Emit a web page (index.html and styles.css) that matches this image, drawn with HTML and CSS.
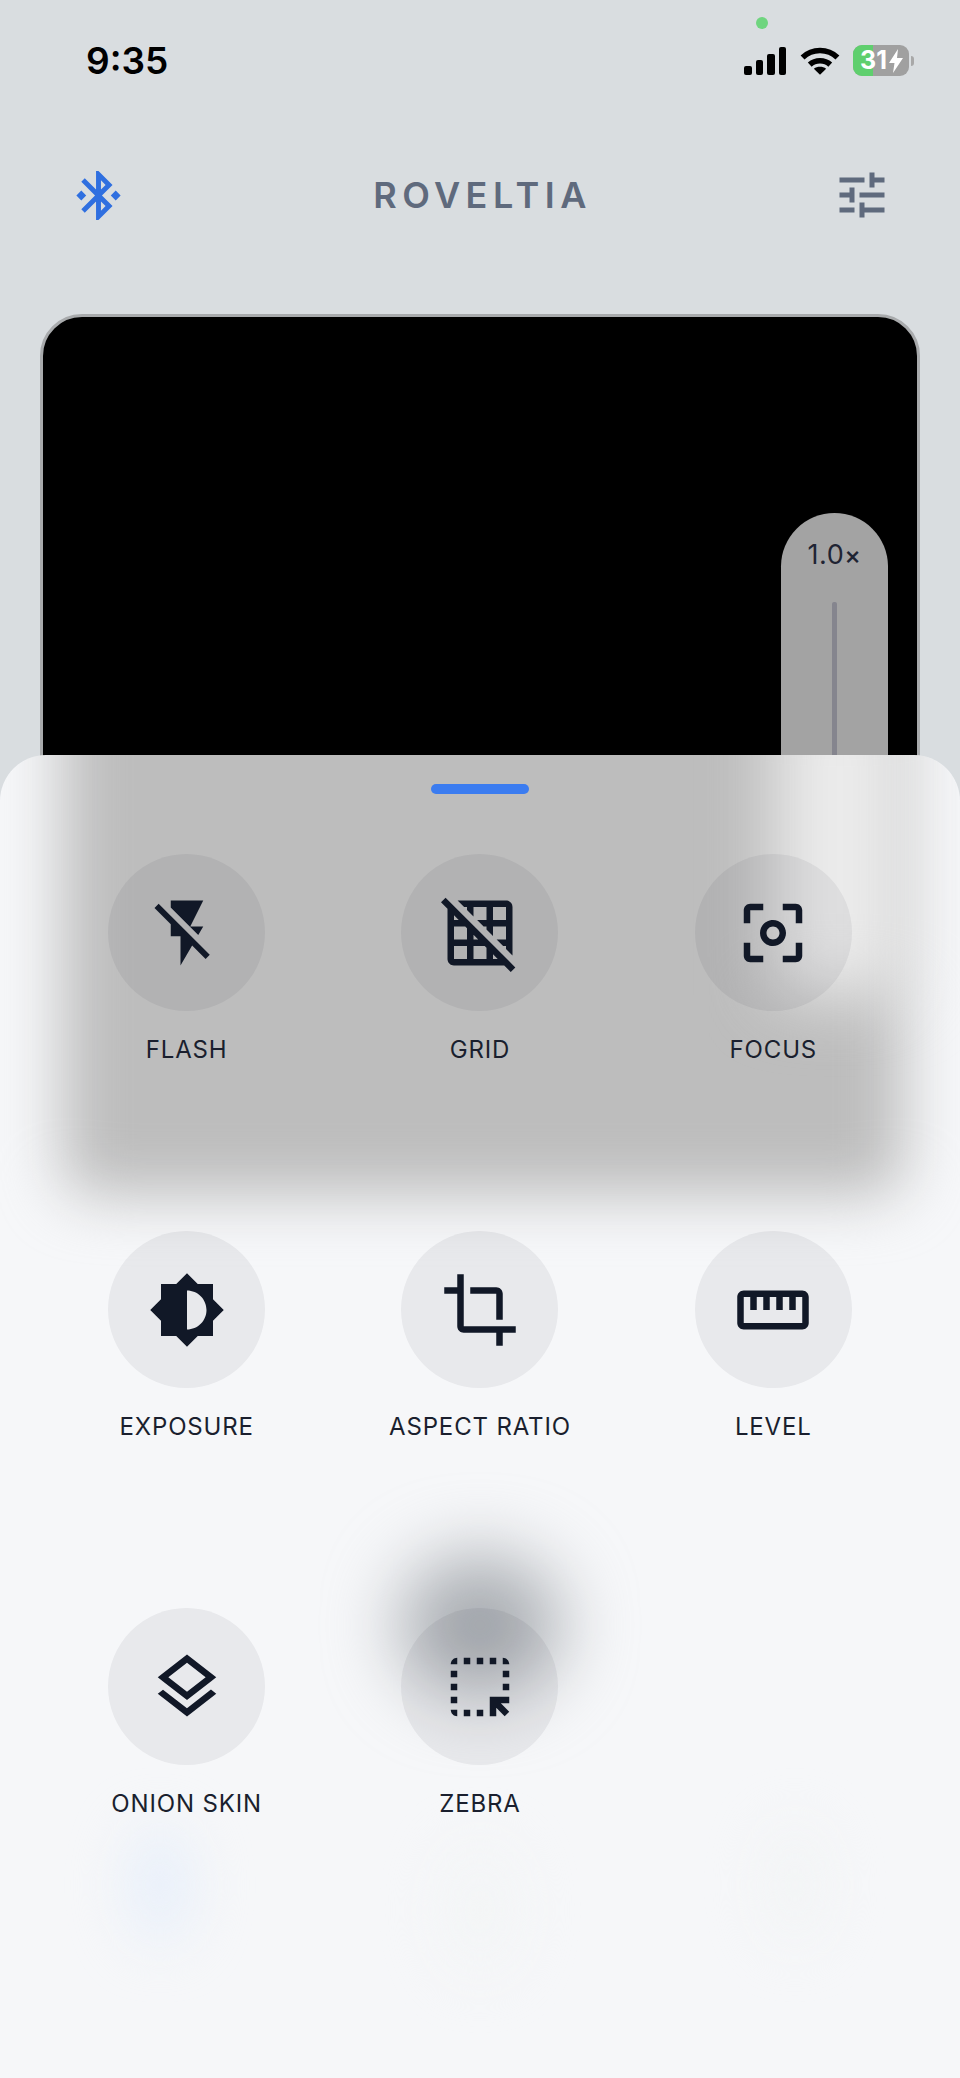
FILE: index.html
```html
<!DOCTYPE html>
<html>
<head>
<meta charset="utf-8">
<title>Roveltia</title>
<link rel="stylesheet" href="styles.css">
</head>
<body>
<div class="app">

  <div class="statusbar">
    <span class="time">9:35</span>
    <span class="camdot"></span>
    <div class="sysicons">
      <div class="signal"><i class="b1"></i><i class="b2"></i><i class="b3"></i><i class="b4"></i></div>
      <svg class="wifi" viewBox="0 0 39 28">
        <path d="M2.500 11C12 2 27 2 36.500 11" fill="none" stroke="#000" stroke-width="5.500"/>
        <path d="M9.500 18C15 13 24 13 29.500 18" fill="none" stroke="#000" stroke-width="5.500"/>
        <path d="M19.500 28L13.500 22C17 19.500 22 19.500 25.500 22Z"/>
      </svg>
      <div class="battery">
        <span class="battery-fill"></span>
        <span class="battery-num">31</span>
        <svg class="battery-bolt" viewBox="0 0 14 24"><path d="M9 0L0 14h5.500L4 24l10-15H8z"/></svg>
      </div>
      <span class="battery-nub"></span>
    </div>
  </div>

  <div class="topbar">
    <svg class="ico-bt" viewBox="0 0 24 24"><path d="M7 12l-2-2-2 2 2 2 2-2zm10.710-4.290L12 2h-1v7.590L6.410 5 5 6.410 10.590 12 5 17.590 6.410 19 11 14.410V22h1l5.710-5.710-4.300-4.290 4.300-4.290zM13 5.830l1.880 1.880L13 9.590V5.830zm1.880 10.460L13 18.170v-3.760l1.880 1.880zM19 10l-2 2 2 2 2-2-2-2z"/></svg>
    <div class="brand">ROVELTIA</div>
    <svg class="ico-tune" viewBox="0 0 24 24"><path d="M3 17v2h6v-2H3zM3 5v2h10V5H3zm10 16v-2h8v-2h-8v-2h-2v6h2zM7 9v2H3v2h4v2h2V9H7zm14 4v-2H11v2h10zm-6-4h2V7h4V5h-4V3h-2v6z"/></svg>
  </div>

  <div class="viewer">
    <div class="zoompill">
      <div class="zoomval">1.0<small>×</small></div>
      <div class="zoomtrack"></div>
    </div>
  </div>

  <div class="sheet">
    <div class="blob blob-grey"></div>
    <div class="blob blob-light"></div>
    <div class="blob blob-dark"></div>
    <div class="blob blob-blue"></div>
    <div class="blob blob-faint1"></div>
    <div class="blob blob-faint2"></div>

    <div class="handle"></div>

    <div class="tools">
      <div class="tool">
        <div class="tool-btn"><svg viewBox="0 0 24 24"><path d="M3.270 3L2 4.270l5 5V13h3v9l3.580-6.140L17.730 20 19 18.730 3.270 3zM17 10h-4l4-8H7v2.180l8.460 8.460L17 10z"/></svg></div>
        <div class="tool-name">FLASH</div>
      </div>
      <div class="tool">
        <div class="tool-btn"><svg viewBox="0 0 24 24"><path d="M8 4v.890l2 2V4h4v4h-2.890l2 2H14v.890l2 2V10h4v4h-2.890l2 2H20v.890l2 2V4c0-1.100-.9-2-2-2H5.110l2 2H8zm8 0h4v4h-4V4zM1.410 1.140L0 2.550l2 2V20c0 1.100.9 2 2 2h15.450l2.010 2.010 1.410-1.410L1.410 1.140zM10 12.550L11.450 14H10v-1.450zm-6-6L5.450 8H4V6.550zM8 20H4v-4h4v4zm0-6H4v-4h3.450l.55.55V14zm6 6h-4v-4h3.450l.55.55V20zm2 0v-1.450L17.450 20H16z"/></svg></div>
        <div class="tool-name">GRID</div>
      </div>
      <div class="tool">
        <div class="tool-btn"><svg viewBox="0 0 24 24"><path d="M5 15H3v4c0 1.100.9 2 2 2h4v-2H5v-4zM5 5h4V3H5c-1.100 0-2 .9-2 2v4h2V5zm14-2h-4v2h4v4h2V5c0-1.100-.9-2-2-2zm0 16h-4v2h4c1.100 0 2-.9 2-2v-4h-2v4zM12 8c-2.210 0-4 1.790-4 4s1.790 4 4 4 4-1.790 4-4-1.790-4-4-4zm0 6c-1.100 0-2-.9-2-2s.9-2 2-2 2 .9 2 2-.9 2-2 2z"/></svg></div>
        <div class="tool-name">FOCUS</div>
      </div>

      <div class="tool">
        <div class="tool-btn"><svg viewBox="0 0 24 24"><path d="M20 15.310L23.310 12 20 8.690V4h-4.690L12 .69 8.690 4H4v4.690L.69 12 4 15.310V20h4.690L12 23.310 15.310 20H20v-4.690zM12 18V6c3.310 0 6 2.690 6 6s-2.690 6-6 6z"/></svg></div>
        <div class="tool-name">EXPOSURE</div>
      </div>
      <div class="tool">
        <div class="tool-btn"><svg viewBox="0 0 24 24"><path d="M17 15h2V7c0-1.100-.9-2-2-2H9v2h8v8zM7 17V1H5v4H1v2h4v10c0 1.100.9 2 2 2h10v4h2v-4h4v-2H7z"/></svg></div>
        <div class="tool-name">ASPECT RATIO</div>
      </div>
      <div class="tool">
        <div class="tool-btn"><svg viewBox="0 0 24 24"><path d="M21 6H3c-1.100 0-2 .9-2 2v8c0 1.100.9 2 2 2h18c1.100 0 2-.9 2-2V8c0-1.100-.9-2-2-2zm0 10H3V8h2v4h2V8h2v4h2V8h2v4h2V8h2v4h2V8h2v8z"/></svg></div>
        <div class="tool-name">LEVEL</div>
      </div>

      <div class="tool">
        <div class="tool-btn"><svg viewBox="0 0 24 24"><path d="M11.990 18.540l-7.370-5.730L3 14.070l9 7 9-7-1.630-1.270-7.380 5.740zM12 16l7.360-5.730L21 9l-9-7-9 7 1.630 1.270L12 16zm0-11.470L17.740 9 12 13.470 6.260 9 12 4.530z"/></svg></div>
        <div class="tool-name">ONION SKIN</div>
      </div>
      <div class="tool">
        <div class="tool-btn"><svg viewBox="0 0 24 24"><path d="M17 5h-2V3h2v2zm-2 16h2v-2.590L19.590 21 21 19.590 18.410 17H21v-2h-6v6zm4-12h2V7h-2v2zm0 4h2v-2h-2v2zm-8 8h2v-2h-2v2zM7 5h2V3H7v2zM3 17h2v-2H3v2zm2 4v-2H3c0 1.100.9 2 2 2zM19 3v2h2c0-1.100-.9-2-2-2zm-8 2h2V3h-2v2zM3 9h2V7H3v2zm4 12h2v-2H7v2zm-4-8h2v-2H3v2zm0-8h2V3c-1.100 0-2 .9-2 2z"/></svg></div>
        <div class="tool-name">ZEBRA</div>
      </div>
    </div>
  </div>

</div>
</body>
</html>
```

FILE: styles.css
```css
html, body { margin: 0; padding: 0; background: #d9dde0; }
body { font-family: Inter, "Liberation Sans", sans-serif; }

.app { position: relative; width: 960px; height: 2078px; overflow: hidden; background: #d9dde0; }

/* status bar */
.statusbar { position: relative; display: flex; justify-content: space-between; height: 122px; padding: 45px 46px 0 86px; box-sizing: border-box; }
.time { font-size: 37px; font-weight: 600; line-height: 32px; color: #000; }
.camdot { position: absolute; left: 756px; top: 17px; width: 12px; height: 12px; border-radius: 50%; background: #6fd57f; }
.sysicons { display: flex; align-items: flex-start; }
.signal { display: flex; align-items: flex-end; gap: 4px; height: 28px; margin-top: 2px; }
.signal i { display: block; width: 7.500px; background: #000; border-radius: 2px; }
.signal .b1 { height: 9px; }
.signal .b2 { height: 15px; }
.signal .b3 { height: 21px; }
.signal .b4 { height: 28px; }
.wifi { width: 40px; height: 29px; margin: 1px 13px 0 14px; }
.battery { position: relative; display: flex; align-items: center; width: 56px; height: 31px; border-radius: 9px; overflow: hidden; background: #a0a0a0; }
.battery-fill { position: absolute; left: 0; top: 0; bottom: 0; width: 20px; background: #5fcf6e; }
.battery-num { position: relative; margin-left: 7px; font-size: 25px; font-weight: 700; line-height: 31px; color: #fff; }
.battery-bolt { position: relative; width: 14px; height: 24px; margin-left: 2px; fill: #fff; }
.battery-nub { width: 3px; height: 10px; margin: 11px 0 0 2px; border-radius: 0 3px 3px 0; background: #a8a8a8; }

/* header */
.topbar { display: flex; align-items: center; justify-content: space-between; height: 146px; padding: 0 68px 0 69px; margin-bottom: 46px; }
.ico-bt { width: 59px; height: 59px; fill: #2f6fe0; }
.ico-tune { width: 60px; height: 60px; fill: #5f6a7d; }
.brand { margin-left: 5px; font-size: 36px; font-weight: 600; letter-spacing: 5.500px; color: #5f6a7d; }

/* camera view */
.viewer { position: relative; width: 874px; height: 700px; margin-left: 40px; border: 3px solid #a8aaac; border-radius: 42px; background: #000; }
.zoompill { position: absolute; left: 738px; top: 196px; width: 107px; height: 400px; border-radius: 54px 54px 0 0; background: #a3a3a3; text-align: center; }
.zoomval { margin-top: 24px; font-size: 27px; line-height: 36px; letter-spacing: 0.500px; color: #1f2433; }
.zoomval small { font-size: 25px; font-weight: 500; }
.zoomtrack { width: 5px; height: 300px; margin: 29px auto 0; background: #85858e; border-radius: 2px; }

/* bottom sheet */
.sheet { position: absolute; left: 0; right: 0; top: 755px; bottom: 0; overflow: hidden; border-radius: 46px 46px 0 0; background: #f6f7f9; }
.blob { position: absolute; }
.blob-grey { left: 62px; top: -90px; width: 842px; height: 530px; background: #bdbdbd; border-radius: 30px; filter: blur(30px); }
.blob-light { left: 775px; top: -70px; width: 130px; height: 310px; background: #ececec; filter: blur(34px); }
.blob-dark { left: 400px; top: 800px; width: 160px; height: 140px; border-radius: 50%; background: #a8acb1; filter: blur(36px); }
.blob-blue { left: 125px; top: 1070px; width: 70px; height: 120px; border-radius: 50%; background: #e9f0fa; filter: blur(26px); }
.blob-faint1 { left: 440px; top: 1090px; width: 80px; height: 130px; border-radius: 50%; background: #f3f5f6; filter: blur(26px); }
.blob-faint2 { left: 765px; top: 1070px; width: 60px; height: 120px; border-radius: 50%; background: #f2f4f5; filter: blur(26px); }

.handle { position: relative; width: 98px; height: 10px; margin: 29px auto 60px; border-radius: 5px; background: #3b7cf0; }

.tools { position: relative; display: grid; grid-template-columns: repeat(3, 1fr); grid-auto-rows: 377px; padding: 0 40px; }
.tool { display: flex; flex-direction: column; align-items: center; }
.tool-btn { display: flex; align-items: center; justify-content: center; width: 157px; height: 157px; border-radius: 50%; background: rgba(17, 24, 39, 0.06); }
.tool-btn svg { width: 78px; height: 78px; fill: #111827; fill-rule: evenodd; }
.tool-name { margin-top: 25px; font-size: 24px; line-height: 28px; letter-spacing: 0.850px; color: #1a1f2e; }
```
